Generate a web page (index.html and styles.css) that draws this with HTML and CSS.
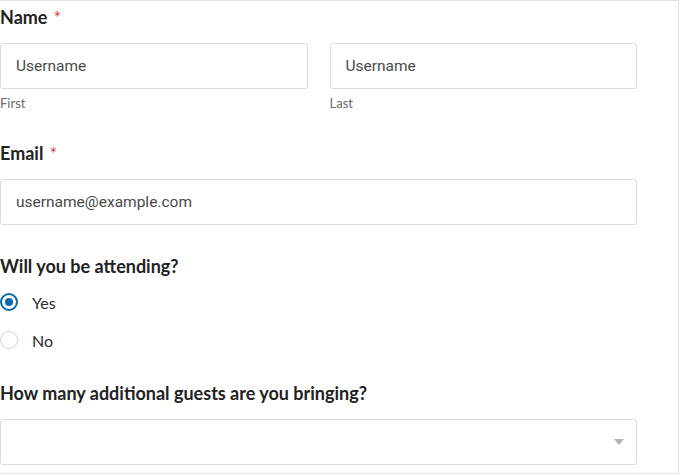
FILE: index.html
```html
<!DOCTYPE html>
<html lang="en">
<head>
<meta charset="utf-8">
<title>RSVP Form</title>
<link rel="stylesheet" href="styles.css">
</head>
<body>
<div class="frame">
  <form class="form">
    <div class="field field-name">
      <div class="label">Name <span class="req">*</span></div>
      <div class="row">
        <div class="col">
          <input class="input" type="text" value="Username">
          <div class="sub">First</div>
        </div>
        <div class="col">
          <input class="input" type="text" value="Username">
          <div class="sub">Last</div>
        </div>
      </div>
    </div>
    <div class="field">
      <div class="label">Email <span class="req">*</span></div>
      <input class="input wide" type="email" value="username@example.com">
    </div>
    <div class="field field-attend">
      <div class="label">Will you be attending?</div>
      <div class="choices">
        <label class="choice"><input class="radio" type="radio" name="att" checked><span>Yes</span></label>
        <label class="choice"><input class="radio" type="radio" name="att"><span>No</span></label>
      </div>
    </div>
    <div class="field">
      <div class="label">How many additional guests are you bringing?</div>
      <div class="select wide">
        <svg class="caret" width="10" height="6" viewBox="0 0 10 6"><path d="M0 0H10L5 6Z" fill="#b3b3b3"/></svg>
      </div>
    </div>
  </form>
</div>
</body>
</html>
```
FILE: styles.css
```css
html, body {
  margin: 0;
  padding: 0;
  background: #ffffff;
}
.frame {
  box-sizing: border-box;
  width: 679px;
  height: 474px;
  border: 1px solid #e3e3e3;
  border-left: none;
  overflow: hidden;
}
.form {
  padding-top: 5px;
  width: 637px;
  font-family: "Lato", "Noto Sans", sans-serif;
}
.field {
  margin-bottom: 30px;
}
.field-name,
.field-attend {
  margin-bottom: 31px;
}
.label {
  height: 22px;
  font-size: 18px;
  line-height: 22px;
  font-weight: 700;
  color: #222222;
  margin-bottom: 15px;
}
.req {
  color: #d63637;
  font-weight: 400;
  font-size: 17px;
  line-height: 1;
  margin-left: 2px;
}
.row {
  display: flex;
  gap: 22px;
}
.col {
  flex: 1;
  display: flex;
  flex-direction: column;
}
.input {
  box-sizing: border-box;
  width: 100%;
  height: 46px;
  margin: 0;
  padding: 0 15px;
  border: 1px solid #dcdcdc;
  border-radius: 3px;
  background: #ffffff;
  font-family: "Roboto", sans-serif;
  font-size: 15.5px;
  color: #4a4a4a;
  outline: none;
}
.wide {
  width: 637px;
}
.sub {
  margin-top: 6px;
  font-size: 13px;
  line-height: 16px;
  color: #6b6b6b;
}
.choices {
  display: flex;
  flex-direction: column;
  gap: 16px;
  margin-top: -1px;
}
.choice {
  display: flex;
  align-items: center;
  gap: 14px;
  height: 22px;
  font-size: 16px;
  color: #2b2b2b;
}
.radio {
  appearance: none;
  -webkit-appearance: none;
  box-sizing: border-box;
  width: 18px;
  height: 18px;
  margin: 0;
  border: 1px solid #d2d2d2;
  border-radius: 50%;
  background: #ffffff;
  display: grid;
  place-items: center;
}
.radio:checked {
  border: 2px solid #0a69ad;
}
.radio:checked::after {
  content: "";
  width: 8px;
  height: 8px;
  border-radius: 50%;
  background: #0a69ad;
}
.select {
  box-sizing: border-box;
  height: 46px;
  border: 1px solid #dcdcdc;
  border-radius: 3px;
  display: flex;
  align-items: center;
  justify-content: flex-end;
  padding-right: 12px;
}
.caret {
  display: block;
}
```
